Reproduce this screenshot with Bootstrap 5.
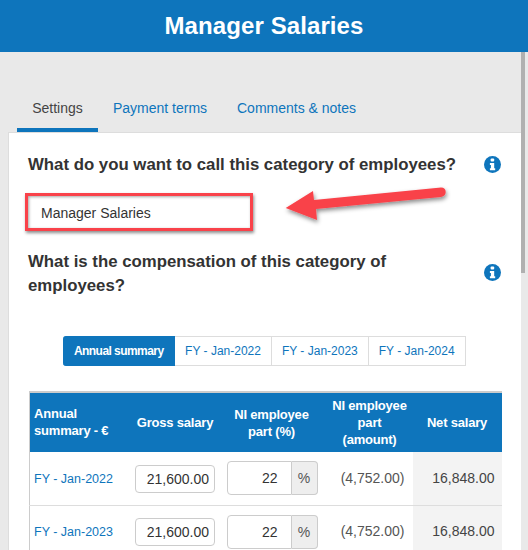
<!DOCTYPE html>
<html lang="en"><head><meta charset="utf-8"><title>Manager Salaries</title>
<link href="https://cdn.jsdelivr.net/npm/bootstrap@5.3.0/dist/css/bootstrap.min.css" rel="stylesheet">
<style>
html,body{height:550px;overflow:hidden}
body{background:#e9e9e9;font-family:"Liberation Sans",Arial,sans-serif;color:#333;font-size:14px;position:relative}
.top-bar{height:52px;background:#0e75bc;color:#fff;font-size:24px;font-weight:700;line-height:52px;text-align:center;letter-spacing:.1px}
.tab-strip{padding:36px 0 0 17px;height:80px;gap:0}
.tab-item{display:block;height:44px;padding:0 15px;line-height:40px;font-size:14px;color:#0e75bc;text-decoration:none}
.tab-item.on{color:#444;border-bottom:4px solid #0e75bc;width:81px;text-align:center;padding:0}
.tab-item.second{width:124px;padding:0;text-align:center}
.panel-box{background:#fff;margin-left:8px;width:513px;height:418px;border-top:1px solid #ddd;border-left:1px solid #ddd;padding:0 20px 0 19px}
.q-row{font-size:16.8px;font-weight:700;line-height:24px;color:#333}
.q-one{padding-top:20px;height:62px}
.name-field{width:223px;height:34px;margin:1px 0 0 0;padding:0 13px;border:0;font-size:14px;color:#333;background:#fff;display:block}
.q-two{padding-top:1px;margin-top:19px;height:87px}
.q-two .q-text{width:400px}
.info-dot{flex:none;width:17px;height:17px}
.info-one{margin-top:3px}
.info-two{margin-top:14px}
.seg-group{display:flex;justify-content:center}
.seg-item{height:30px;line-height:28px;border:1px solid #ddd;border-left-width:0;padding:0 10px;font-size:12px;color:#0e75bc;text-decoration:none;background:#fff}
.seg-item.on{background:#0e75bc;border-color:#0e75bc;color:#fff;font-weight:700;border-radius:3px 0 0 3px;padding:0 10.5px;letter-spacing:-.55px}
.sal-table{width:472px;margin:25px 0 0 1px;border-collapse:collapse;table-layout:fixed;border:1px solid #ccc;border-top-width:2px;border-right:0}
.sal-table th{background:#0e75bc;color:#fff;font-size:13px;line-height:17px;font-weight:700;text-align:center;height:60px;padding:0;letter-spacing:-.2px}
.sal-table th:first-child{text-align:left;padding:0 0 2px 4px}
.sal-table th.ni-head{padding-right:5px}
.sal-table td{height:53px;padding:0;border-bottom:1px solid #ddd;vertical-align:middle;font-size:14px;color:#333;background:#fff}
.sal-table td a{color:#0e75bc;text-decoration:none;font-size:12.5px;padding-left:4px}
.gross-in{width:80px;height:28px;border:1px solid #ccc;border-radius:4px;text-align:right;padding:0 5px 0 0;font-size:14px;color:#333;display:block;margin:1px auto 0}
.pct-wrap{display:flex;width:91px;height:34px;margin-left:5px}
.pct-in{width:65px;height:34px;border:1px solid #ccc;border-radius:4px 0 0 4px;text-align:right;padding:0 13px 0 0;font-size:14px;color:#333}
.pct-add{width:26px;border:1px solid #ccc;border-left:0;border-radius:0 4px 4px 0;background:#eee;text-align:center;line-height:32px;color:#555;font-size:14px}
.num-cell{text-align:right;padding-right:8px!important;color:#555!important}
.net-cell{background:#f3f3f3!important;text-align:right;padding-right:7px!important;color:#444!important}
.red-frame{position:absolute;left:25px;top:193px;width:228px;height:37.500px;border:3px solid #f9424a;box-shadow:1px 2px 3px rgba(0,0,0,.45),inset 1px 1px 3px rgba(0,0,0,.35);pointer-events:none}
.red-arrow{position:absolute;left:280px;top:180px;width:180px;height:50px;overflow:visible}
.scroll-rail{position:absolute;left:521px;top:52px;width:7px;height:498px;background:#e9e9e9}
.scroll-rail i{display:block;width:4px;height:221px;background:#b0b0b0}
</style></head><body>
<div class="top-bar">Manager Salaries</div>
<nav class="tab-strip d-flex">
<a class="tab-item on" href="#">Settings</a>
<a class="tab-item second" href="#">Payment terms</a>
<a class="tab-item" href="#">Comments &amp; notes</a>
</nav>
<main class="panel-box">
<div class="q-row q-one d-flex justify-content-between align-items-start">
<span>What do you want to call this category of employees?</span>
<svg class="info-dot info-one" viewBox="0 0 17 17"><circle cx="8.5" cy="8.5" r="8.5" fill="#0e75bc"/><rect x="6.6" y="2.6" width="3.6" height="3" rx="1" fill="#fff"/><path d="M5.9 7h4.3v5.3h1v1.9H5.9v-1.9h1V8.900h-1z" fill="#fff"/></svg>
</div>
<input class="name-field" value="Manager Salaries" aria-label="Category name">
<div class="q-row q-two d-flex justify-content-between align-items-start">
<span class="q-text">What is the compensation of this category of employees?</span>
<svg class="info-dot info-two" viewBox="0 0 17 17"><circle cx="8.5" cy="8.5" r="8.5" fill="#0e75bc"/><rect x="6.6" y="2.6" width="3.6" height="3" rx="1" fill="#fff"/><path d="M5.9 7h4.3v5.3h1v1.9H5.9v-1.9h1V8.900h-1z" fill="#fff"/></svg>
</div>
<div class="seg-group">
<a class="seg-item on" href="#">Annual summary</a>
<a class="seg-item" href="#">FY - Jan-2022</a>
<a class="seg-item" href="#">FY - Jan-2023</a>
<a class="seg-item" href="#">FY - Jan-2024</a>
</div>
<table class="sal-table">
<colgroup><col style="width:99px"><col style="width:93px"><col style="width:105px"><col style="width:86px"><col style="width:89px"></colgroup>
<thead><tr><th>Annual<br>summary - €</th><th>Gross salary</th><th class="ni-head">NI employee<br>part (%)</th><th>NI employee<br>part<br>(amount)</th><th>Net salary</th></tr></thead>
<tbody>
<tr><td><a href="#">FY - Jan-2022</a></td><td><input class="gross-in" value="21,600.00" aria-label="Gross salary"></td><td><div class="pct-wrap"><input class="pct-in" value="22" aria-label="NI percent"><span class="pct-add">%</span></div></td><td class="num-cell">(4,752.00)</td><td class="net-cell">16,848.00</td></tr>
<tr><td><a href="#">FY - Jan-2023</a></td><td><input class="gross-in" value="21,600.00" aria-label="Gross salary"></td><td><div class="pct-wrap"><input class="pct-in" value="22" aria-label="NI percent"><span class="pct-add">%</span></div></td><td class="num-cell">(4,752.00)</td><td class="net-cell">16,848.00</td></tr>
</tbody></table>
</main>
<div class="red-frame"></div>
<svg class="red-arrow" viewBox="0 0 180 50"><defs><filter id="sh" x="-10%" y="-30%" width="125%" height="180%"><feDropShadow dx="1" dy="2.5" stdDeviation="2" flood-color="#000" flood-opacity=".45"/></filter></defs><path filter="url(#sh)" d="M5.700 28 L33 11 L34 20 L161 7.500 Q165.700 7.500 165.700 12 Q165.700 16 161 17 L36 29 L37 40 Z" fill="#f9424a"/></svg>
<div class="scroll-rail"><i></i></div>
<script src="https://cdn.jsdelivr.net/npm/bootstrap@5.3.0/dist/js/bootstrap.bundle.min.js"></script>
</body></html>
